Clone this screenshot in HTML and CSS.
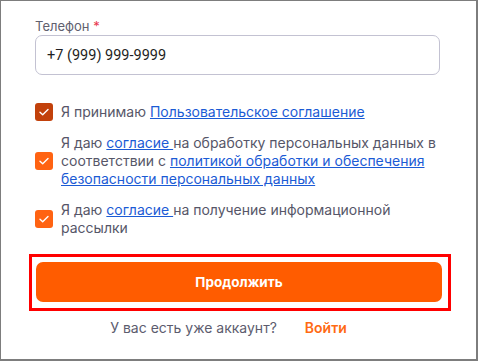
FILE: index.html
```html
<!DOCTYPE html>
<html lang="ru">
<head>
<meta charset="utf-8">
<link rel="stylesheet" href="styles.css">
</head>
<body>
<div class="frame">
  <label class="label">Телефон <span class="req">*</span></label>
  <div class="input">+7 (999) 999-9999</div>
  <div class="checks">
    <div class="check">
      <span class="box box-dark"><svg viewBox="0 0 18 18" width="18" height="18"><path d="M5 9.2l2.7 2.6L13 6.5" fill="none" stroke="#fff" stroke-width="1.4" stroke-linecap="round" stroke-linejoin="round"/></svg></span>
      <p class="txt">Я принимаю <a href="#">Пользовательское соглашение</a></p>
    </div>
    <div class="check">
      <span class="box"><svg viewBox="0 0 18 18" width="18" height="18"><path d="M5 9.2l2.7 2.6L13 6.5" fill="none" stroke="#fff" stroke-width="1.4" stroke-linecap="round" stroke-linejoin="round"/></svg></span>
      <p class="txt">Я даю <a href="#">согласие </a>на обработку персональных данных в соответствии с <a href="#">политикой обработки и обеспечения безопасности персональных данных</a></p>
    </div>
    <div class="check">
      <span class="box"><svg viewBox="0 0 18 18" width="18" height="18"><path d="M5 9.2l2.7 2.6L13 6.5" fill="none" stroke="#fff" stroke-width="1.4" stroke-linecap="round" stroke-linejoin="round"/></svg></span>
      <p class="txt">Я даю <a href="#">согласие </a>на получение информационной рассылки</p>
    </div>
  </div>
  <div class="highlight">
    <button class="btn">Продолжить</button>
  </div>
  <div class="footer">
    <span class="q">У вас есть уже аккаунт?</span>
    <a class="login" href="#">Войти</a>
  </div>
</div>
</body>
</html>
```
FILE: styles.css
```css
html, body {
  margin: 0;
  padding: 0;
  background: #fff;
}
.frame {
  box-sizing: border-box;
  width: 478px;
  height: 361px;
  border: 1px solid #7d7d7d;
  border-right-width: 2px;
  border-bottom-width: 2px;
  padding: 16px 36px 0 34px;
  font-family: Inter, "Noto Sans", sans-serif;
  color: #545466;
}
.label {
  display: block;
  font-size: 13px;
  line-height: 18px;
  color: #60606f;
  margin-bottom: 0;
}
.req {
  color: #e8354d;
}
.input {
  box-sizing: border-box;
  height: 40px;
  border: 1px solid #c3c2d2;
  border-radius: 7px;
  padding: 0 11px;
  display: flex;
  align-items: center;
  font-family: Roboto, "Liberation Sans", sans-serif;
  font-size: 14.5px;
  color: #1f1f24;
}
.checks {
  display: flex;
  flex-direction: column;
  gap: 13px;
  margin-top: 28px;
}
.check {
  display: flex;
  align-items: center;
  gap: 8px;
}
.box {
  flex: none;
  width: 18px;
  height: 18px;
  border-radius: 3px;
  background: #ff6312;
  display: flex;
}
.box-dark {
  background: #c2410b;
}
.txt {
  margin: 0;
  font-size: 14px;
  line-height: 18px;
  color: #565668;
}
.txt a {
  color: #1b5bd5;
  text-decoration: underline;
}
.highlight {
  margin: 17px 0 0 -6px;
  border: 3px solid #ff0000;
  padding: 5px 1px 6px 4px;
  width: 411px;
}
.btn {
  display: block;
  width: 406px;
  height: 40px;
  border: none;
  border-radius: 7px;
  background: #ff5c00;
  color: #fff;
  font-family: Inter, "Noto Sans", sans-serif;
  font-weight: 700;
  font-size: 13.5px;
}
.footer {
  display: flex;
  justify-content: center;
  gap: 28px;
  margin-top: 8px;
  font-size: 14px;
  line-height: 18px;
  padding-right: 18px;
}
.q {
  color: #5c5c6e;
}
.login {
  color: #ff6a13;
  font-weight: 600;
  text-decoration: none;
}
```
